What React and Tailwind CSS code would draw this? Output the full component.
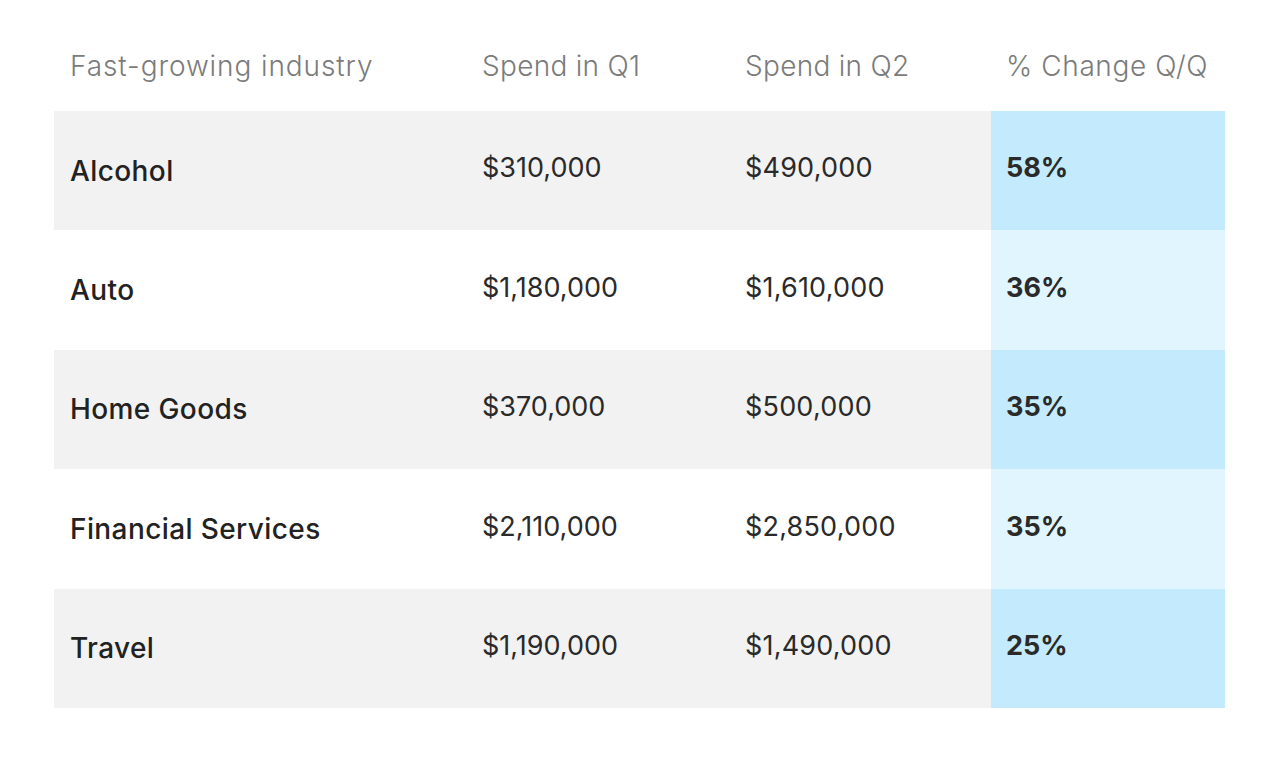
const rows = [
  { name: "Alcohol", q1: "$310,000", q2: "$490,000", pct: "58%" },
  { name: "Auto", q1: "$1,180,000", q2: "$1,610,000", pct: "36%" },
  { name: "Home Goods", q1: "$370,000", q2: "$500,000", pct: "35%" },
  { name: "Financial Services", q1: "$2,110,000", q2: "$2,850,000", pct: "35%" },
  { name: "Travel", q1: "$1,190,000", q2: "$1,490,000", pct: "25%" },
];

export default function App() {
  return (
    <div className="w-[1280px] h-[763px] bg-white font-['Inter',sans-serif]">
      <div className="ml-[54px] w-[1171px]">
        {/* Header */}
        <div className="grid grid-cols-[412px_263px_262px_234px] h-[111px] pt-[21px] items-center text-[28px] tracking-[0.3px] font-light text-[#7b7b7b]">
          <div className="pl-4 tracking-[0.9px]">Fast-growing industry</div>
          <div className="pl-4">Spend in Q1</div>
          <div className="pl-4">Spend in Q2</div>
          <div className="pl-[15px] tracking-[0.6px]">% Change Q/Q</div>
        </div>

        {/* Rows */}
        {rows.map((r, i) => {
          const odd = i % 2 === 0;
          return (
            <div
              key={r.name}
              className={`grid grid-cols-[412px_263px_262px_234px] h-[119.4px] ${odd ? "bg-[#f2f2f2]" : "bg-white"}`}
            >
              <div className="pl-4 flex items-center text-[28px] tracking-[0.4px] font-medium text-[#222]">{r.name}</div>
              <div className="pl-4 flex items-center pb-1 text-[27px] text-[#2a2a2a]">{r.q1}</div>
              <div className="pl-4 flex items-center pb-1 text-[27px] tracking-[0.2px] text-[#2a2a2a]">{r.q2}</div>
              <div
                className={`pl-[15px] flex items-center pb-1 text-[27px] font-bold text-[#2a2a2a] ${odd ? "bg-[#c3eafd]" : "bg-[#e0f5fd]"}`}
              >
                {r.pct}
              </div>
            </div>
          );
        })}
      </div>
    </div>
  );
}
